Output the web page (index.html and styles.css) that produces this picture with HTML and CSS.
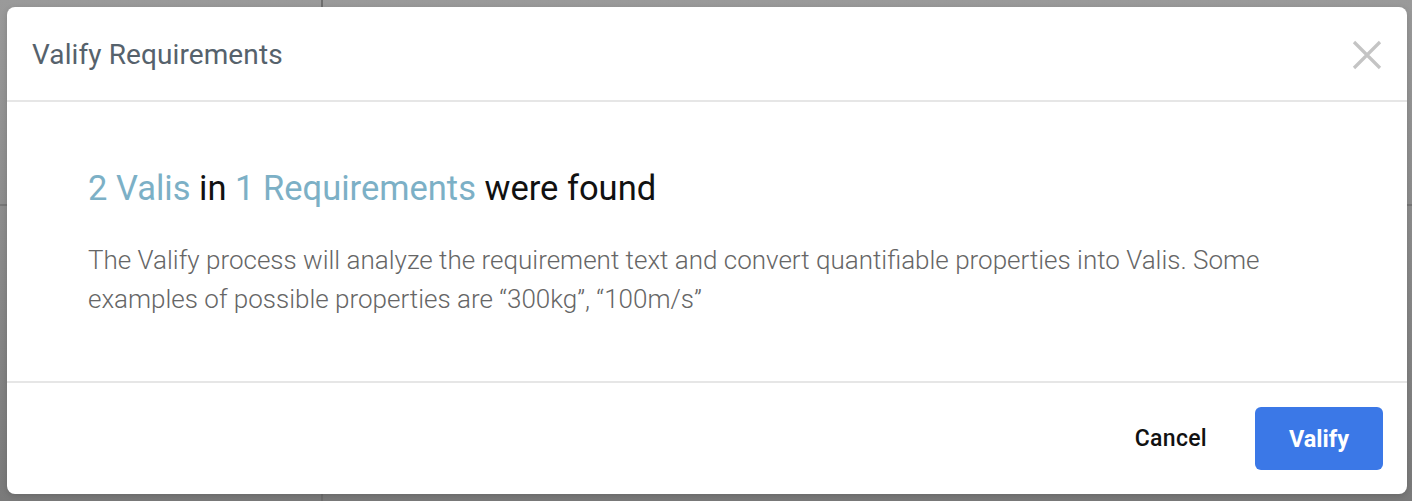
FILE: index.html
```html
<!DOCTYPE html>
<html>
<head>
<meta charset="utf-8">
<link rel="stylesheet" href="styles.css">
</head>
<body>
<div class="backdrop">
  <div class="bg-line-v"></div>
  <div class="bg-line-h"></div>
  <div class="modal">
    <div class="modal-header">
      <h2 class="modal-title">Valify Requirements</h2>
      <button class="close-btn" aria-label="Close">
        <svg width="30" height="30" viewBox="0 0 30 30"><path d="M2 2 L28 28 M28 2 L2 28" stroke="#c4c4c4" stroke-width="3.2" fill="none"/></svg>
      </button>
    </div>
    <div class="modal-body">
      <h3 class="found"><span class="hl">2 Valis</span> in <span class="hl">1 Requirements</span> were found</h3>
      <p class="desc">The Valify process will analyze the requirement text and convert quantifiable properties into Valis. Some examples of possible properties are “300kg”, “100m/s”</p>
    </div>
    <div class="modal-footer">
      <button class="btn-cancel">Cancel</button>
      <button class="btn-primary">Valify</button>
    </div>
  </div>
</div>
</body>
</html>
```
FILE: styles.css
```css
html, body {
  margin: 0;
  padding: 0;
}
body {
  width: 1412px;
  height: 501px;
  overflow: hidden;
  font-family: Roboto, "Liberation Sans", sans-serif;
}
.backdrop {
  position: relative;
  width: 1412px;
  height: 501px;
  background: linear-gradient(#9a9a9a, #7a7a7a);
  padding: 7px;
  box-sizing: border-box;
}
.bg-line-v {
  position: absolute;
  left: 321px;
  top: 0;
  width: 2px;
  height: 501px;
  background: #6e6e6e;
}
.bg-line-h {
  position: absolute;
  left: 0;
  top: 204px;
  width: 1412px;
  height: 2px;
  background: #777;
}
.modal {
  position: relative;
  width: 1400px;
  height: 487px;
  background: #fff;
  border-radius: 8px;
  display: flex;
  flex-direction: column;
  box-shadow: 0 2px 6px rgba(0,0,0,0.15);
}
.modal-header {
  height: 93px;
  border-bottom: 2px solid #e6e6e6;
  display: flex;
  align-items: center;
  justify-content: space-between;
  padding: 0 25px 0 25px;
  box-sizing: content-box;
}
.modal-title {
  margin: 0;
  font-size: 28px;
  font-weight: 400;
  color: #56626c;
  letter-spacing: 0.1px;
  padding-top: 1px;
}
.close-btn {
  background: none;
  border: none;
  padding: 0;
  width: 30px;
  height: 30px;
  margin-right: 0;
  margin-top: 2px;
}
.close-btn svg { display: block; }
.modal-body {
  flex: 1;
  padding: 0 81px;
  border-bottom: 2px solid #e6e6e6;
}
.found {
  margin: 64px 0 0 0;
  font-size: 34.5px;
  font-weight: 400;
  color: #111;
  line-height: 44px;
}
.hl { color: #7cb0c6; }
.desc {
  margin: 31px 0 0 0;
  max-width: 1200px;
  font-size: 26px;
  font-weight: 300;
  color: #666;
  line-height: 39px;
}
.modal-footer {
  height: 111px;
  display: flex;
  align-items: center;
  justify-content: flex-end;
  padding: 0 24px;
  gap: 48px;
}
.btn-cancel {
  background: none;
  border: none;
  font-family: Roboto, "Liberation Sans", sans-serif;
  font-size: 23px;
  font-weight: 500;
  letter-spacing: 0.3px;
  color: #111;
  padding: 0;
}
.btn-primary {
  width: 128px;
  height: 63px;
  border: none;
  border-radius: 6px;
  background: #3b78e7;
  color: #fff;
  font-family: Roboto, "Liberation Sans", sans-serif;
  font-size: 23.5px;
  font-weight: 700;
}
```
